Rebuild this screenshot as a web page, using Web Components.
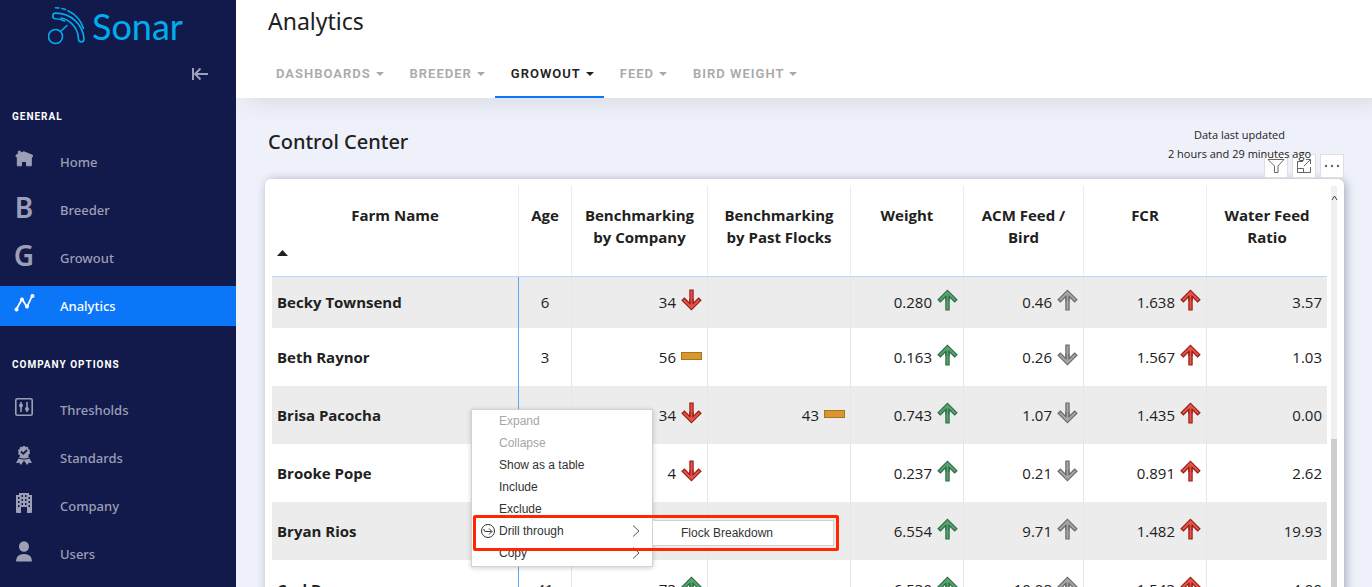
<!DOCTYPE html>
<html lang="en">
<head>
<meta charset="utf-8">
<title>Sonar – Analytics</title>
<style>
  html, body { margin: 0; height: 100%; }
  body {
    --ui: "Noto Sans", "Open Sans", sans-serif;
    --caps: Roboto, "Noto Sans", sans-serif;
    --data: "Open Sans", "Noto Sans", sans-serif;
    --accent: #0b76f8;
    --ink: #212121;
    font-family: var(--ui);
    color: var(--ink);
    overflow: hidden;
  }
</style>
</head>
<body>
<app-shell>
  <side-nav slot="nav">
    <nav-section label="General">
      <nav-item icon="home">Home</nav-item>
      <nav-item letter="B">Breeder</nav-item>
      <nav-item letter="G">Growout</nav-item>
      <nav-item icon="chart" active>Analytics</nav-item>
    </nav-section>
    <nav-section label="Company options">
      <nav-item icon="sliders">Thresholds</nav-item>
      <nav-item icon="award">Standards</nav-item>
      <nav-item icon="building">Company</nav-item>
      <nav-item icon="user">Users</nav-item>
    </nav-section>
  </side-nav>
  <page-bar slot="bar" heading="Analytics">
    <tab-item>Dashboards</tab-item>
    <tab-item>Breeder</tab-item>
    <tab-item active>Growout</tab-item>
    <tab-item>Feed</tab-item>
    <tab-item>Bird weight</tab-item>
  </page-bar>
  <report-panel heading="Control Center">
    <span slot="updated">Data last updated<br>2 hours and 29 minutes ago</span>
    <farm-table></farm-table>
    <context-menu slot="menu"></context-menu>
  </report-panel>
</app-shell>

<script>
const define = (name, html, setup) => {
  const template = document.createElement('template');
  template.innerHTML = html;
  customElements.define(name, class extends HTMLElement {
    connectedCallback() {
      if (this.shadowRoot) return;
      const root = this.attachShadow({ mode: 'open' });
      root.append(template.content.cloneNode(true));
      if (setup) setup(this, root);
    }
  });
};

define('app-shell', `
  <style>
    :host { display: grid; grid-template-columns: 236px minmax(0, 1fr); height: 100vh; overflow: hidden; }
    main { background: #eef1fa; min-width: 0; }
  </style>
  <slot name="nav"></slot>
  <main><slot name="bar"></slot><slot></slot></main>
`);

define('side-nav', `
  <style>
    :host { display: block; background: #121a4b; color: #9c9fb5; }
    header { height: 109px; }
    .logo { display: flex; align-items: center; gap: 6px; height: 52px; padding-left: 48px; color: #00aeef; text-decoration: none; font: 400 36px/52px Lato, sans-serif; }
    .logo svg { flex: none; }
    .fold { display: block; margin: 14px 28px 0 auto; padding: 0; border: 0; background: none; color: inherit; height: 16px; }
    .fold svg { display: block; }
  </style>
  <header>
    <a class="logo" href="#">
      <svg width="38" height="40" viewBox="0 0 38 40" fill="none" stroke="currentColor" stroke-width="1.6" stroke-linecap="round">
        <circle cx="7.500" cy="30.500" r="7"/>
        <path d="M12.500 25.500L19 19.500M16.500 15C13.500 13.600 10.500 12.900 7.500 12.800C4 12.600 4 7.300 7.500 7.100C23 7 35 18.500 36 33C36 36.800 30.500 36.800 30.500 33C30.200 22 22 13.500 13 12"/>
        <path d="M7.500 1.700L11 2M14 2.500L17.500 3.500M20 4.800C27.500 8.400 33 14.500 35.600 22.500"/>
      </svg>
      <span>Sonar</span>
    </a>
    <button class="fold" aria-label="Collapse menu">
      <svg width="17" height="16" viewBox="0 0 17 16" fill="none" stroke="currentColor" stroke-width="2"><path d="M2 2V14M17 8H4M9.500 2.500L4 8L9.500 13.500"/></svg>
    </button>
  </header>
  <nav><slot></slot></nav>
`);

define('nav-section', `
  <style>
    :host { display: block; margin-bottom: 31px; }
    h2 { margin: 0 12px 17px; font: 700 10px/16px var(--caps); letter-spacing: 1px; text-transform: uppercase; color: #fff; }
    div { display: grid; gap: 8px; }
  </style>
  <h2></h2><div><slot></slot></div>
`, (el, root) => { root.querySelector('h2').textContent = el.getAttribute('label'); });

const icons = {
  home: '<path fill="currentColor" stroke="currentColor" stroke-linejoin="round" d="M6.300 2.200H8.300V4L12 2.800L20.500 6.300V7.800H19.300V16.800H14.500V12.500H9.500V16.800H5.300V7.800H4V6.300L6.300 5Z"/>',
  chart: '<path d="M4 17L10 6L15 14L20 3" fill="none" stroke="currentColor" stroke-width="1.8"/><g fill="currentColor"><circle cx="4.500" cy="16.500" r="2"/><circle cx="10" cy="6.500" r="1.900"/><circle cx="15" cy="13.500" r="2"/><circle cx="20.500" cy="3" r="2"/></g>',
  sliders: '<g fill="none" stroke="currentColor" stroke-width="1.600"><rect x="3.800" y="1.800" width="16.400" height="16.400" rx="1.500"/><path d="M9 5V15M15 5V15"/></g><g fill="currentColor"><circle cx="9" cy="8.500" r="2"/><circle cx="15" cy="12" r="2"/></g>',
  award: '<path fill="currentColor" d="M8 11L4 18L7.200 17.700L9 20L12 15.500L15 20L16.800 17.700L20 18L16 11Z"/><circle cx="12" cy="7" r="5.400" fill="currentColor" stroke="currentColor" stroke-width="1.200" stroke-dasharray="2 1.400"/><path d="M7 13.300Q12 15 17 13.300" fill="none" stroke="#121a4b"/><path d="M9 6.500L11.300 8.800L15 5" fill="none" stroke="#121a4b" stroke-width="1.800"/>',
  building: '<path fill="currentColor" d="M7 0H17V2H20V19Q20 20 19 20H15V14H9V20H5Q4 20 4 19V2H7Z"/><g fill="#121a4b"><path d="M6 4h1.500v2H6zM6 8h1.500v2H6zM6 12h1.500v2H6zM9.500 2h1.500v2H9.500zM9.500 6h1.500v2H9.500zM9.500 10h1.500v2H9.500zM13 2h1.500v2H13zM13 6h1.500v2H13zM13 10h1.500v2H13zM16.500 4H18v2h-1.500zM16.500 8H18v2h-1.500zM16.500 12H18v2h-1.500z"/></g>',
  user: '<g fill="currentColor"><ellipse cx="12" cy="5.500" rx="5" ry="5.300"/><path d="M4 20.500Q4 13 12 13T20 20.500Z"/></g>'
};

define('nav-item', `
  <style>
    :host { display: block; }
    a { display: flex; align-items: center; gap: 24px; height: 40px; padding: 0 12px; color: inherit; text-decoration: none; font-size: 13px; line-height: 20px; font-weight: 500; }
    i { display: grid; place-items: center; width: 24px; height: 20px; margin-bottom: 6px; font: 600 28px/20px var(--ui); }
    svg { overflow: visible; }
    :host([active]) a { background: var(--accent); color: #fff; }
  </style>
  <a href="#"><i aria-hidden="true"></i><slot></slot></a>
`, (el, root) => {
  const box = root.querySelector('i');
  if (el.hasAttribute('letter')) box.textContent = el.getAttribute('letter');
  else box.innerHTML = '<svg width="24" height="20" viewBox="0 0 24 20">' + icons[el.getAttribute('icon')] + '</svg>';
  if (el.hasAttribute('active')) root.querySelector('a').setAttribute('aria-current', 'page');
});

define('page-bar', `
  <style>
    :host { display: block; background: #fff; box-shadow: 12px 0 26px rgba(60, 70, 60, .16); clip-path: inset(0 0 -40px 0); }
    h1 { margin: 0; padding: 5px 32px 0; font-size: 23px; line-height: 32px; font-weight: 400; }
    nav { display: flex; padding: 13px 24px 0; }
  </style>
  <h1></h1><nav><slot></slot></nav>
`, (el, root) => { root.querySelector('h1').textContent = el.getAttribute('heading'); });

define('tab-item', `
  <style>
    :host { display: block; }
    button { display: flex; align-items: center; gap: 5px; height: 48px; padding: 1px 10px 0 16px; border: 0; border-bottom: 2px solid transparent; background: none; color: #a9a9a9; font: 600 13px/20px var(--caps); letter-spacing: 1px; text-transform: uppercase; white-space: nowrap; }
    :host([active]) button { color: var(--ink); border-color: var(--accent); }
  </style>
  <button aria-haspopup="true"><span><slot></slot></span><svg width="8" height="4" viewBox="0 0 8 4"><path d="M0 0H8L4 4Z" fill="currentColor"/></svg></button>
`);

define('report-panel', `
  <style>
    :host { display: block; padding: 30px 28px 0 29px; }
    header { display: flex; justify-content: space-between; height: 51px; padding-left: 3px; }
    h2 { margin: 0; font-size: 20px; line-height: 28px; font-weight: 500; }
    .updated { position: relative; z-index: 2; margin: -3px 33px 0 0; text-align: center; font: 11px/19px var(--data); color: #222; }
    .card { position: relative; min-height: 460px; padding: 7px 7px 0; background: #fff; border-radius: 6px; box-shadow: 2px 1px 10px rgba(40, 45, 80, .36); display: flex; gap: 4px; }
    .card > slot:first-of-type { display: block; flex: 1; min-width: 0; }
    .bar { display: grid; grid-template-rows: 253px 1fr; width: 6px; background: #f0f0f0; }
    .bar svg { margin-top: 9px; overflow: visible; }
    .bar b { background: #cdcdcd; }
    .tools { position: absolute; right: 0; top: -25px; display: flex; gap: 4px; z-index: 1; }
    .tools button { display: grid; place-items: center; width: 24px; height: 24px; padding: 0; border: 1px solid #e0e0e0; background: #fff; color: #666; }
    ::slotted(context-menu) { position: absolute; left: 206px; top: 230px; z-index: 3; }
  </style>
  <header><h2></h2><div class="updated"><slot name="updated"></slot></div></header>
  <div class="card">
    <slot></slot>
    <div class="bar"><svg width="6" height="5" viewBox="0 0 6 5" fill="none" stroke="#444"><path d="M1 5L3.500 1L6 5"/></svg><b></b></div>
    <div class="tools">
      <button aria-label="Filters"><svg width="18" height="16" viewBox="0 0 18 16" fill="none" stroke="currentColor"><path d="M1 1.500H17L11 8V14.500H7.500V8Z"/></svg></button>
      <button aria-label="Focus mode"><svg width="16" height="16" viewBox="0 0 16 16" fill="none" stroke="currentColor"><path d="M7 3.500H1.500V14.500H14.500V9M1.500 10.500H7.500V14.500M8 8L14.500 1.500M10 1.500H14.500V6"/></svg></button>
      <button aria-label="More options"><svg width="16" height="4" viewBox="0 0 16 4" fill="currentColor"><circle cx="2" cy="2" r="1.200"/><circle cx="8" cy="2" r="1.200"/><circle cx="14" cy="2" r="1.200"/></svg></button>
    </div>
    <slot name="menu"></slot>
  </div>
`, (el, root) => { root.querySelector('h2').textContent = el.getAttribute('heading'); });

define('trend-icon', `
  <style>
    :host { display: block; width: 21px; height: 22px; margin-bottom: 4px; --edge: #2f6b45; --fill: #56a56f; }
    :host([tone=red]) { --edge: #9c1a14; --fill: #e2564a; }
    :host([tone=gray]) { --edge: #6a6a6a; --fill: #a6a6a6; }
    svg { display: block; }
    :host([dir=down]) svg { transform: rotate(180deg); }
  </style>
  <svg width="21" height="22" viewBox="0 0 21 22" fill="none"></svg>
`, (el, root) => {
  root.querySelector('svg').innerHTML = el.getAttribute('dir') === 'flat'
    ? '<rect x=".5" y="8.500" width="20" height="7" fill="#d9982f" stroke="#a87322"/>'
    : '<path d="M10.500 3V21.500M1.800 12.200L10.500 3.500L19.200 12.200" stroke="var(--edge)" stroke-width="4.400"/><path d="M10.500 4V20.500M2.600 11.400L10.500 3.500L18.400 11.400" stroke="var(--fill)" stroke-width="2"/><path d="M8.900 7.500V12M12.100 7.500V12" stroke="var(--edge)"/>';
});

define('farm-table', `
  <style>
    :host { display: block; font-family: var(--data); font-size: 15px; line-height: 22px; }
    table { width: 100%; table-layout: fixed; border-collapse: separate; border-spacing: 0; }
    th, td { box-sizing: border-box; padding: 0 5px; border-right: 1px solid #ececec; }
    th:last-child, td:last-child { border-right: 0; }
    thead th { height: 91px; padding: 18px 8px 0; vertical-align: top; font-weight: 700; border-bottom: 1px solid #b5d8fb; }
    thead th:first-child { padding: 18px 5px 0; }
    thead svg { display: block; margin-top: 24px; }
    tbody tr { height: 58px; }
    tbody tr:first-child { height: 51px; }
    tbody tr:first-child > * { padding-bottom: 2px; }
    tbody tr:nth-child(odd) { background: #ececec; }
    tbody td { border-right-color: #e6e6e6; }
    tbody th { text-align: left; font-weight: 700; border-right-color: #5aa7fa; }
    tbody td:nth-child(2) { text-align: center; }
    .v { display: flex; justify-content: flex-end; align-items: center; gap: 5px; }
    .c1 { width: 53px; } .c2 { width: 136px; } .c3 { width: 143px; } .c4 { width: 113px; }
    .c5 { width: 120px; } .c6 { width: 123px; } .c7 { width: 120px; }
  </style>
  <table>
    <colgroup><col><col class="c1"><col class="c2"><col class="c3"><col class="c4"><col class="c5"><col class="c6"><col class="c7"></colgroup>
    <thead><tr>
      <th aria-sort="ascending">Farm Name<svg width="11" height="6" viewBox="0 0 11 6"><path d="M0 6L5.500 0L11 6Z" fill="currentColor"/></svg></th>
      <th>Age</th><th>Benchmarking by Company</th><th>Benchmarking by Past Flocks</th><th>Weight</th><th>ACM Feed / Bird</th><th>FCR</th><th>Water Feed Ratio</th>
    </tr></thead>
    <tbody></tbody>
  </table>
`, (el, root) => {
  const rows = [
    ['Becky Townsend', '6', '34 down red', '', '0.280 up green', '0.46 up gray', '1.638 up red', '3.57'],
    ['Beth Raynor', '3', '56 flat', '', '0.163 up green', '0.26 down gray', '1.567 up red', '1.03'],
    ['Brisa Pacocha', '', '34 down red', '43 flat', '0.743 up green', '1.07 down gray', '1.435 up red', '0.00'],
    ['Brooke Pope', '', '4 down red', '', '0.237 up green', '0.21 down gray', '0.891 up red', '2.62'],
    ['Bryan Rios', '', '', '', '6.554 up green', '9.71 up gray', '1.482 up red', '19.93'],
    ['Carl Dunn', '41', '73 up green', '', '6.530 up green', '10.08 up gray', '1.543 up red', '4.00']
  ];
  root.querySelector('tbody').innerHTML = rows.map(([name, age, ...cells]) =>
    `<tr><th scope="row">${name}</th><td>${age}</td>` + cells.map(cell => {
      const [value, dir, tone] = cell.split(' ');
      return `<td><div class="v">${value}${dir ? `<trend-icon dir="${dir}" tone="${tone}"></trend-icon>` : ''}</div></td>`;
    }).join('') + '</tr>').join('');
});

define('context-menu', `
  <style>
    :host { display: block; box-sizing: border-box; width: 182px; padding: 0 0 2px; background: #fff; border: 1px solid #d2d2d2; box-shadow: 0 1px 5px rgba(0, 0, 0, .2); font: 12px/22px "Liberation Sans", sans-serif; }
    button { display: grid; grid-template-columns: 16px 1fr 8px; gap: 3px; align-items: center; width: 100%; height: 22px; padding: 0 12px 0 8px; border: 0; background: none; font: inherit; color: #333; text-align: left; }
    button span { grid-column: 2; }
    button:disabled { color: #a6a6a6; }
    .drill { position: relative; }
    .sub { position: absolute; left: 100%; top: 0; width: 182px; box-sizing: border-box; border: 1px solid #d2d2d2; background: #fff; }
    .sub button { height: 24px; padding-left: 9px; }
    .mark { position: absolute; left: 1px; top: -5px; width: 366px; height: 36px; box-sizing: border-box; border: 3px solid #ff2600; border-radius: 2px; pointer-events: none; }
  </style>
  <button disabled><span>Expand</span></button>
  <button disabled><span>Collapse</span></button>
  <button><span>Show as a table</span></button>
  <button><span>Include</span></button>
  <button><span>Exclude</span></button>
  <div class="drill">
    <button aria-haspopup="true"><svg width="16" height="16" viewBox="0 0 16 16" fill="none" stroke="#333"><circle cx="8" cy="8" r="6.500"/><path d="M4 6V7Q4 8.500 6 8.500H11.500M9 5.500L12 8.500L9 11.500"/></svg><span>Drill through</span><svg width="8" height="12" viewBox="0 0 8 12" fill="none" stroke="#555"><path d="M1 .5L7 6L1 11.500"/></svg></button>
    <div class="sub"><button><span>Flock Breakdown</span></button></div>
    <div class="mark"></div>
  </div>
  <button aria-haspopup="true"><span>Copy</span><svg width="8" height="12" viewBox="0 0 8 12" fill="none" stroke="#555"><path d="M1 .5L7 6L1 11.500"/></svg></button>
`);
</script>
</body>
</html>
